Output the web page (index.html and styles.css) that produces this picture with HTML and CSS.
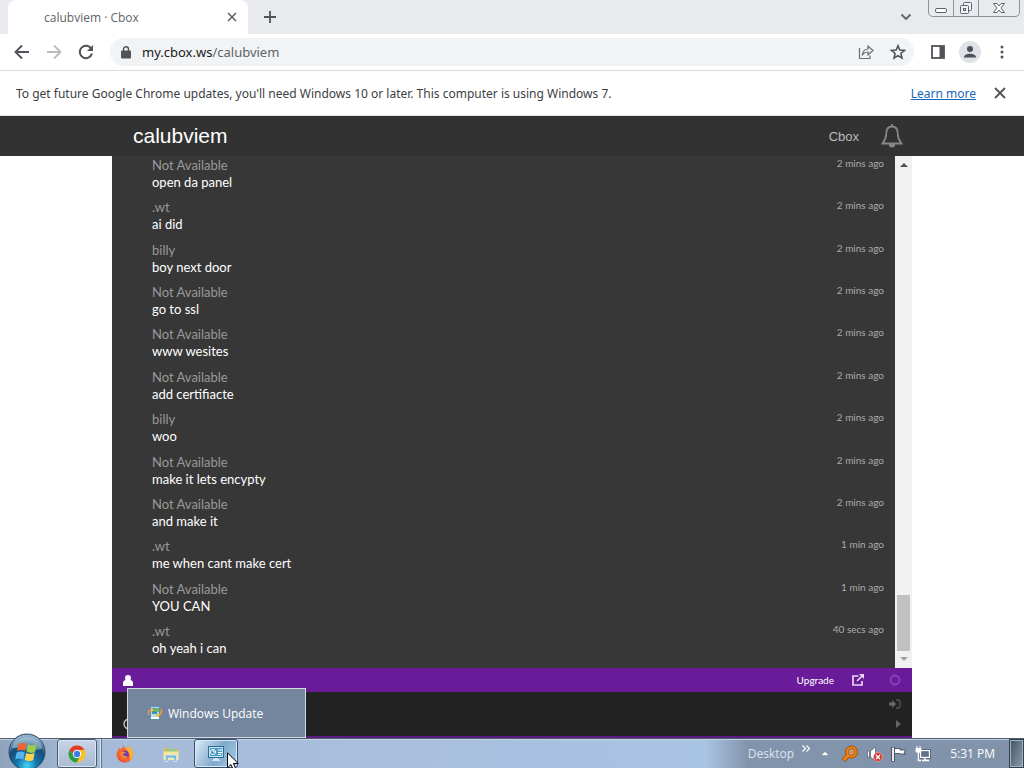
FILE: index.html
```html
<!DOCTYPE html>
<html lang="en">
<head>
  <meta charset="UTF-8">
  <meta name="viewport" content="width=device-width, initial-scale=1">
  <title>calubviem · Cbox</title>
  <link rel="stylesheet" href="styles.css">
</head>

<body>
  <!-- TAB STRIP -->
  <div class="tabstrip">
    <div class="tab">
      <span class="tab-title">calubviem · Cbox</span>
      <button class="icon-btn" aria-label="Close tab">
        <svg width="10" height="10" viewBox="0 0 10 10"><path d="M1 1l8 8M9 1l-8 8" stroke="#5f6368" stroke-width="1.6"/></svg>
      </button>
    </div>
    <button class="icon-btn new-tab" aria-label="New tab">
      <svg width="12" height="12" viewBox="0 0 12 12"><path d="M6 0v12M0 6h12" stroke="#505357" stroke-width="1.8"/></svg>
    </button>
    <button class="icon-btn tab-search" aria-label="Search tabs">
      <svg width="12" height="8" viewBox="0 0 12 8"><path d="M1.500 1.500L6 6l4.500-4.500" fill="none" stroke="#5f6368" stroke-width="1.8"/></svg>
    </button>
    <div class="win-buttons">
      <button class="win-btn" aria-label="Minimize">
        <svg width="24" height="16" viewBox="0 0 24 16"><rect x="6.500" y="8.500" width="11" height="4" rx="1.500" fill="#fff" stroke="#5c6270"/></svg>
      </button>
      <button class="win-btn" aria-label="Restore">
        <svg width="24" height="16" viewBox="0 0 24 16" fill="#f4f5f7" stroke="#5c6270"><rect x="9.500" y="2.500" width="8" height="8" rx="1"/><rect x="6.500" y="5.500" width="8" height="8" rx="1"/><rect x="9.500" y="8.500" width="2" height="2"/></svg>
      </button>
      <button class="win-btn win-close" aria-label="Close">
        <svg width="40" height="16" viewBox="0 0 40 16"><path d="M14.500 3.500h3.500l2 2.500 2-2.500h3.500l-3.500 4.500 3.500 4.500h-3.500l-2-2.500-2 2.500h-3.500l3.500-4.500z" fill="#fff" stroke="#5c6270"/></svg>
      </button>
    </div>
  </div>

  <!-- TOOLBAR -->
  <div class="toolbar">
    <button class="icon-btn nav-btn" aria-label="Back">
      <svg width="16" height="16" viewBox="0 0 16 16"><path d="M15 8H2M8 1.500L1.500 8 8 14.500" fill="none" stroke="#505357" stroke-width="1.900"/></svg>
    </button>
    <button class="icon-btn nav-btn" aria-label="Forward">
      <svg width="16" height="16" viewBox="0 0 16 16"><path d="M1 8h13M8 1.500L14.500 8 8 14.500" fill="none" stroke="#babcbe" stroke-width="1.900"/></svg>
    </button>
    <button class="icon-btn nav-btn" aria-label="Reload">
      <svg width="16" height="16" viewBox="0 0 16 16"><path d="M13.300 4.700A6.200 6.200 0 1 0 14 9.500" fill="none" stroke="#505357" stroke-width="2"/><path d="M15 1v6H9z" fill="#505357"/></svg>
    </button>
    <div class="omnibox">
      <svg width="10" height="13" viewBox="0 0 10 13"><rect y="4.500" width="10" height="8" rx="1" fill="#505357"/><path d="M2.500 5V3.300a2.500 2.500 0 0 1 5 0V5" fill="none" stroke="#505357" stroke-width="1.400"/></svg>
      <a class="url" href="#">my.cbox.ws<span>/calubviem</span></a>
      <button class="icon-btn" aria-label="Share">
        <svg width="16" height="16" viewBox="0 0 16 16" fill="none" stroke="#6a6d71" stroke-width="1.200"><path d="M1.500 4v10.500h10.500v-3"/><path d="M4.500 10.500C5 7 7 5 10 5V2l5 4.500-5 4.500V8C7.500 8 6 8.800 4.500 10.500z"/></svg>
      </button>
      <button class="icon-btn" aria-label="Bookmark this page">
        <svg width="16" height="16" viewBox="0 0 16 16"><path d="M8 1.800l1.800 4.300 4.600.4-3.500 3 1.100 4.600L8 11.600l-4 2.500 1.100-4.600-3.500-3 4.600-.4z" fill="none" stroke="#505357" stroke-width="1.600"/></svg>
      </button>
    </div>
    <div class="toolbar-actions">
      <button class="icon-btn" aria-label="Side panel">
        <svg width="16" height="16" viewBox="0 0 16 16"><rect x="2" y="2" width="12" height="12" fill="none" stroke="#505357" stroke-width="1.800"/><path d="M9.500 2H14v12H9.500z" fill="#505357"/></svg>
      </button>
      <button class="icon-btn" aria-label="Profile">
        <svg width="22" height="22" viewBox="0 0 22 22"><circle cx="11" cy="11" r="11" fill="#dfe3e8"/><circle cx="11" cy="8" r="3" fill="#4a5159"/><path d="M5 16.500c0-5 12-5 12 0z" fill="#4a5159"/></svg>
      </button>
      <button class="icon-btn" aria-label="Menu">
        <svg width="16" height="16" viewBox="0 0 16 16" fill="#505357"><circle cx="8" cy="3" r="1.500"/><circle cx="8" cy="8" r="1.500"/><circle cx="8" cy="13" r="1.500"/></svg>
      </button>
    </div>
  </div>

  <!-- INFO BAR -->
  <div class="infobar">
    <p>To get future Google Chrome updates, you'll need Windows 10 or later. This computer is using Windows 7.</p>
    <a href="#">Learn more</a>
    <button class="icon-btn" aria-label="Dismiss">
      <svg width="12" height="12" viewBox="0 0 12 12"><path d="M1 1l10 10M11 1L1 11" stroke="#505357" stroke-width="1.800"/></svg>
    </button>
  </div>

  <!-- PAGE -->
  <header class="site-header">
    <div class="site-header-inner">
      <h1>calubviem</h1>
      <a href="#">Cbox</a>
      <button class="icon-btn" aria-label="Notifications">
        <svg width="22" height="24" viewBox="0 0 22 24"><path d="M11 2.500c-4.500 0-5.800 3.500-5.800 7.500 0 5-1.700 7-3.700 9.500h19c-2-2.500-3.700-4.500-3.700-9.500 0-4-1.300-7.500-5.800-7.500z" fill="none" stroke="#858585" stroke-width="1.800"/><path d="M10 0h2v3h-2zM7.800 20h6.400a3.200 3.600 0 0 1-6.400 0z" fill="#858585"/></svg>
      </button>
    </div>
  </header>

  <main class="cbox">
    <div class="messages-wrap">
      <ul class="messages">
        <li><time>2 mins ago</time><b>Not Available</b><p>open da panel</p></li>
        <li><time>2 mins ago</time><b>.wt</b><p>ai did</p></li>
        <li><time>2 mins ago</time><b>billy</b><p>boy next door</p></li>
        <li><time>2 mins ago</time><b>Not Available</b><p>go to ssl</p></li>
        <li><time>2 mins ago</time><b>Not Available</b><p>www wesites</p></li>
        <li><time>2 mins ago</time><b>Not Available</b><p>add certifiacte</p></li>
        <li><time>2 mins ago</time><b>billy</b><p>woo</p></li>
        <li><time>2 mins ago</time><b>Not Available</b><p>make it lets encypty</p></li>
        <li><time>2 mins ago</time><b>Not Available</b><p>and make it</p></li>
        <li><time>1 min ago</time><b>.wt</b><p>me when cant make cert</p></li>
        <li><time>1 min ago</time><b>Not Available</b><p>YOU CAN</p></li>
        <li><time>40 secs ago</time><b>.wt</b><p>oh yeah i can</p></li>
      </ul>
      <div class="scrollbar">
        <svg width="8" height="4" viewBox="0 0 8 4"><path d="M0 4l4-4 4 4z" fill="#505050"/></svg>
        <div class="thumb"></div>
        <svg width="8" height="4" viewBox="0 0 8 4"><path d="M0 0l4 4 4-4z" fill="#a0a0a0"/></svg>
      </div>
    </div>

    <div class="panel-bar">
      <button class="icon-btn users" aria-label="Users online">
        <svg width="10" height="11" viewBox="0 0 10 11" fill="#fff"><circle cx="5" cy="3" r="3"/><path d="M0 11V8.500Q0 5 3 5h4q3 0 3 3.500V11z"/></svg>
      </button>
      <a href="#">Upgrade</a>
      <button class="icon-btn" aria-label="Pop out">
        <svg width="12" height="12" viewBox="0 0 12 12"><path d="M6.500 2H1v9h9V7M5 7l5-5" fill="none" stroke="#e8d6f2" stroke-width="1.700"/><path d="M7 0h5v5z" fill="#e8d6f2"/></svg>
      </button>
      <button class="icon-btn status" aria-label="Connection status">
        <svg width="12" height="12" viewBox="0 0 12 12"><circle cx="6" cy="6" r="4.500" fill="none" stroke="#8d43b8" stroke-width="1.800"/></svg>
      </button>
    </div>

    <form class="post-form">
      <div class="post-row">
        <input type="text" aria-label="Name">
        <button type="button" class="icon-btn" aria-label="Log in">
          <svg width="12" height="10" viewBox="0 0 12 10"><path d="M0 3.500h3V1l4 4-4 4V6.500H0z" fill="#666"/><path d="M7 1h2.500Q11 1 11 2.500v5Q11 9 9.500 9H7" fill="none" stroke="#555" stroke-width="1.300"/></svg>
        </button>
      </div>
      <div class="post-row">
        <svg width="12" height="12" viewBox="0 0 12 12"><circle cx="6" cy="6" r="5" fill="none" stroke="#ccc" stroke-width="1.300"/></svg>
        <input type="text" aria-label="Message">
        <button type="button" class="icon-btn" aria-label="Send">
          <svg width="5" height="8" viewBox="0 0 5 8"><path d="M0 0l5 4-5 4z" fill="#666"/></svg>
        </button>
      </div>
    </form>
  </main>

  <!-- TASKBAR -->
  <footer class="taskbar">
    <button class="start" aria-label="Start">
      <svg width="38" height="38" viewBox="0 0 38 38">
        <defs>
          <radialGradient id="orb" cx="50%" cy="88%" r="80%"><stop offset="0" stop-color="#45d5f5"/><stop offset=".35" stop-color="#1674ad"/><stop offset=".7" stop-color="#164b77"/><stop offset="1" stop-color="#8db1cb"/></radialGradient>
        </defs>
        <circle cx="19" cy="19" r="18" fill="url(#orb)" stroke="#304c68"/>
        <path d="M4 15C7 1 31 1 34 15 28 20 12 14 4 15z" fill="#c9dce9" opacity=".45"/>
        <path d="M10.500 11q4-2 8 0l-1.500 7q-4-2-8 0z" fill="#ef6432"/>
        <path d="M20 11.500q4 2 8.500 0l-1.500 7.500q-4 2-8.500-.5z" fill="#9bd04b"/>
        <path d="M8.700 19.500q4-2 8 0l-1.500 7q-4-2-8 0z" fill="#55b6ee"/>
        <path d="M18.200 20q4 2 8.500 0l-1.500 7q-4 2-8.500-.3z" fill="#ffd44b"/>
      </svg>
    </button>
    <button class="task task-open" aria-label="Google Chrome">
      <svg width="18" height="18" viewBox="0 0 18 18"><circle cx="9" cy="9" r="8.500" fill="#fbc11c"/><path d="M1.600 4.800A8.500 8.500 0 0 1 16.400 4.800L9 5 6 11z" fill="#e23a2e"/><path d="M1.600 4.800A8.500 8.500 0 0 0 8.500 17.500L12.500 11 6 11z" fill="#2a9c48"/><circle cx="9" cy="9" r="4.200" fill="#fff"/><circle cx="9" cy="9" r="3.200" fill="#3a7de8"/></svg>
    </button>
    <span class="task-stack"></span>
    <button class="task" aria-label="Firefox">
      <svg width="18" height="18" viewBox="0 0 18 18"><path d="M9 17.500A8 8 0 0 1 2 5l1-2 2 1.500Q6 2 8 1q0 2 2 3l2-3q5 3 5 8.500a8 8 0 0 1-8 8z" fill="#f6662b"/><path d="M10 4l2-3q5 3 5 8.500a8 8 0 0 1-3 6Q15 8 10 4z" fill="#ffb62e"/><path d="M2 8q0 8 8 9-6 1-8-5z" fill="#e1375f"/><circle cx="9" cy="9.500" r="3.800" fill="#6b40b6"/><path d="M4 7q3-1 5 0l1 1q-3 0-3 1.500Q8 12 12 11q-2 4-6 1.500Q4 11 4 7z" fill="#f9862b"/></svg>
    </button>
    <button class="task" aria-label="Windows Explorer">
      <svg width="18" height="18" viewBox="0 0 18 18"><path d="M2 3h5l1 1.500h8V15H2z" fill="#d9b95b"/><path d="M4 4.500h10v7H4z" fill="#8fc984"/><path d="M1.500 6.500h15V15h-15z" fill="#f5e59d"/><path d="M3.500 16.500v-5.200q0-1.300 1.300-1.300h8.400q1.300 0 1.300 1.300v5.200H12V13H6v3.500z" fill="#76b9df" stroke="#dff0fa" stroke-width=".7"/></svg>
    </button>
    <button class="task task-active" aria-label="Windows Update">
      <svg width="18" height="17" viewBox="0 0 18 17"><rect x="1.500" y="1.500" width="15" height="11" fill="#4f9cc7" stroke="#2b6d94"/><rect x="2.500" y="2.500" width="13" height="9" fill="none" stroke="#c1e4f4"/><circle cx="6" cy="7" r="2.500" fill="#317fae" stroke="#fff"/><path d="M6 4.500V7h2.500M11 5h4M11 7.500h4M11 9.500h3" stroke="#fff" fill="none"/><path d="M7 13h4l2 3H5z" fill="#dbe4ea"/></svg>
    </button>
    <div class="tray">
      <span class="tray-label">Desktop</span>
      <button class="icon-btn toolbar-more" aria-label="More">
        <svg width="8" height="7" viewBox="0 0 8 7"><path d="M.5.500l3 3-3 3M4.500.500l3 3-3 3" fill="none" stroke="#fff" stroke-width="1.200"/></svg>
      </button>
      <button class="icon-btn show-hidden" aria-label="Show hidden icons">
        <svg width="8" height="5" viewBox="0 0 8 5"><path d="M0 4.500L4 .500l4 4z" fill="#fff" stroke="#55657a" stroke-width=".4"/></svg>
      </button>
      <button class="icon-btn" aria-label="Search tool">
        <svg width="18" height="18" viewBox="0 0 18 18"><path d="M6.500 11L2.500 15.500" stroke="#a34c09" stroke-width="4.500"/><circle cx="10.500" cy="7" r="6" fill="#f5820f" stroke="#a34c09"/><circle cx="10.500" cy="7" r="3.300" fill="#b0a794" stroke="#a34c09" stroke-width=".8"/><circle cx="10.500" cy="7" r="1.500" fill="#f5820f"/><path d="M7 10.500L2.800 15" stroke="#f5820f" stroke-width="3"/></svg>
      </button>
      <button class="icon-btn" aria-label="Volume">
        <svg width="16" height="16" viewBox="0 0 16 16"><path d="M.5 5h2v6h-2zM3.500 5L8.500 1v14l-5-4z" fill="#fff" stroke="#4c5b6e" stroke-width=".7"/><circle cx="11" cy="11" r="4.500" fill="#d33c35" stroke="#f1c1bd" stroke-width=".6"/><path d="M9 9l4 4M13 9l-4 4" stroke="#fff" stroke-width="1.400"/></svg>
      </button>
      <button class="icon-btn" aria-label="Action Center">
        <svg width="16" height="16" viewBox="0 0 16 16"><path d="M2 1v14.500" stroke="#34414f" stroke-width="3.500"/><path d="M2 1.500V15" stroke="#fff" stroke-width="1.800"/><path d="M3.500 2.500H9v1.500h5.500l-1.500 3 1.500 1H9V7.500H3.500z" fill="#fff" stroke="#34414f" stroke-width=".8"/></svg>
      </button>
      <button class="icon-btn" aria-label="Network">
        <svg width="16" height="16" viewBox="0 0 16 16"><rect x="5.500" y="4.500" width="9" height="7" fill="#5f7186" stroke="#34414f" stroke-width="2.600"/><rect x="5.500" y="4.500" width="9" height="7" fill="#5f7186" stroke="#fff" stroke-width="1.300"/><path d="M7 14.500h7M10 12v2M3.500 6v8.500H6" stroke="#fff" stroke-width="1.400" fill="none"/><path d="M1 2.500h5V5q0 1.500-2.500 1.500T1 5zM2 0v2.500M5 0v2.500" fill="#fff" stroke="#fff"/></svg>
      </button>
      <time class="clock">5:31 PM</time>
    </div>
    <button class="show-desktop" aria-label="Show desktop"></button>

    <!-- thumbnail popup over the page -->
    <div class="preview">
      <svg width="16" height="16" viewBox="0 0 16 16"><rect x="3.500" y="1.500" width="9" height="13" fill="#b9dced" stroke="#5794b5"/><path d="M4 12h8v2H4z" fill="#fff"/><path d="M5 3h5v6H5z" fill="#3f8fc4"/><path d="M8 3h4v4H8z" fill="#72b74d"/><path d="M2 10Q0 6 4 5M14 4q2 4-3 7" fill="none" stroke="#ee9b3b" stroke-width="1.500"/><path d="M4 3l4 2-4 2zM11 8l-3 3 4 1z" fill="#f3c24d"/></svg>
      <span>Windows Update</span>
    </div>
  </footer>

  <!-- mouse pointer -->
  <svg class="pointer" width="12" height="19" viewBox="0 0 12 19"><path d="M.5.800v15l3.500-3.300 2.300 5.200 2.400-1-2.300-5.200h4.800z" fill="#fff" stroke="#000"/></svg>
</body>
</html>
```
FILE: styles.css
```css
* {
  box-sizing: border-box;
}
body {
  display: flex;
  flex-direction: column;
  height: 100vh;
  margin: 0;
  overflow: hidden;
  background: #fff;
  color: #3c4043;
  font-family: 'Open Sans', 'Noto Sans', sans-serif;
  font-size: 12px;
}
h1, p, ul {
  margin: 0;
  padding: 0;
}
svg {
  display: block;
  flex: none;
}
.icon-btn {
  display: flex;
  flex: none;
  padding: 0;
  border: 0;
  background: none;
}

/* tab strip */
.tabstrip {
  display: flex;
  flex: none;
  align-items: center;
  height: 34px;
  padding: 0 4px 0 8px;
  background: #e8eaed;
}
.tab {
  display: flex;
  align-items: center;
  justify-content: space-between;
  width: 240px;
  height: 34px;
  padding: 0 11px 0 36px;
  border-radius: 8px 8px 0 0;
  background: #fff;
}
.tab-title {
  color: #5f6368;
}
.new-tab {
  margin-left: 16px;
}
.tab-search {
  margin-left: auto;
  margin-right: 16px;
}
.win-buttons {
  display: flex;
  align-self: flex-start;
  border: 1px solid #8d929b;
  border-top: 0;
  border-radius: 0 0 5px 5px;
}
.win-btn {
  padding: 0;
  border: 0;
  border-right: 1px solid #8d929b;
  background: none;
}
.win-close {
  border-right: 0;
}

/* toolbar */
.toolbar {
  display: flex;
  flex: none;
  align-items: center;
  gap: 16px;
  height: 37px;
  padding: 0 14px;
  border-bottom: 1px solid #d9dadc;
}
.toolbar-actions {
  display: flex;
  align-items: center;
  gap: 13px;
}
.omnibox {
  display: flex;
  flex: 1;
  align-items: center;
  gap: 16px;
  height: 28px;
  padding: 0 8px 0 11px;
  border-radius: 14px;
  background: #f1f3f4;
}
.omnibox > svg {
  margin-right: -5px;
}
.url {
  flex: 1;
  color: #202124;
  font-family: 'Noto Sans', sans-serif;
  font-size: 13px;
  text-decoration: none;
}
.url span {
  color: #5f6368;
}

/* info bar */
.infobar {
  display: flex;
  flex: none;
  align-items: center;
  height: 45px;
  padding: 0 18px 0 16px;
  border-bottom: 1px solid #e4e6e6;
  font-family: 'Noto Sans', sans-serif;
}
.infobar p {
  flex: 1;
}
.infobar a {
  margin-right: 18px;
  color: #1a66b8;
}

/* site header */
.site-header {
  flex: none;
  background: #323232;
  font-family: 'Liberation Sans', sans-serif;
}
.site-header-inner {
  display: flex;
  align-items: center;
  max-width: 800px;
  height: 40px;
  margin: 0 auto;
  padding: 0 9px 0 21px;
}
.site-header h1 {
  flex: 1;
  color: #fff;
  font-size: 21px;
  font-weight: 400;
}
.site-header a {
  margin-right: 22px;
  color: #bbb;
  font-size: 13px;
  text-decoration: none;
}

/* chat */
.cbox {
  display: flex;
  flex: 1;
  flex-direction: column;
  width: 100%;
  max-width: 800px;
  min-height: 0;
  margin: 0 auto;
  border-bottom: 2px solid #5a1c82;
  background: #222;
  font-family: Lato, sans-serif;
}
.messages-wrap {
  display: flex;
  flex: 1;
  min-height: 0;
  background: #373737;
}
.messages {
  display: flex;
  flex: 1;
  flex-direction: column;
  justify-content: space-between;
  padding: 1px 11px 11px 40px;
  list-style: none;
}
.messages li {
  color: #fff;
  font-size: 13px;
  line-height: 17px;
}
.messages b {
  color: #999;
  font-weight: 400;
}
.messages time {
  float: right;
  color: #aaa;
  font-size: 10px;
  line-height: 12px;
}
.scrollbar {
  display: flex;
  flex-direction: column;
  align-items: center;
  width: 17px;
  padding: 7px 0;
  background: #f1f1f1;
}
.thumb {
  width: 13px;
  height: 56px;
  margin-top: auto;
  margin-bottom: 6px;
  background: #c1c1c1;
}
.panel-bar {
  display: flex;
  flex: none;
  align-items: center;
  gap: 18px;
  height: 24px;
  padding: 0 11px;
  background: #6a1b9a;
}
.panel-bar .users {
  margin-right: auto;
}
.panel-bar a {
  color: #fff;
  font-size: 10px;
  text-decoration: none;
}
.panel-bar .status {
  margin-left: 7px;
}
.post-form {
  flex: none;
  padding: 2px 11px;
}
.post-row {
  display: flex;
  align-items: center;
  height: 20px;
}
.post-row input {
  flex: 1;
  min-width: 0;
  padding: 0 4px;
  border: 0;
  background: none;
  color: #fff;
  font: inherit;
}

/* taskbar */
.taskbar {
  display: flex;
  position: relative;
  flex: none;
  align-items: stretch;
  height: 30px;
  padding-left: 8px;
  border-top: 1px solid #4d5b6c;
  background: linear-gradient(90deg, #8fa3bc, #a5bad6 8%, #a9c1e0 50%, #a9c3e2 69%, #8294ab 73%, #8093aa);
  box-shadow: inset 0 1px #c3d2e4;
}
.start {
  align-self: flex-start;
  margin: -6px 11px 0 0;
  padding: 0;
  border: 0;
  background: none;
}
.task {
  display: flex;
  align-items: center;
  justify-content: center;
  width: 46px;
  padding: 0;
  border: 1px solid transparent;
  border-radius: 3px;
  background: none;
}
.task-open {
  width: 40px;
  border-color: #4c5c70;
  background: linear-gradient(#c6d4e6, #a9bbd2);
  box-shadow: inset 0 0 0 1px #dbe5f1;
}
.task-stack {
  width: 5px;
  border-right: 1px solid #62738a;
  box-shadow: inset -1px 0 #dbe5f1;
}
.task-active {
  width: 44px;
  border-color: #34506b;
  background: linear-gradient(120deg, #dfecf7, #7fa9cc 55%, #a8cdea);
  box-shadow: inset 0 0 0 1px #d7e8f7;
}
.tray {
  display: flex;
  align-items: center;
  gap: 8px;
  margin-left: auto;
  margin-right: 14px;
  color: #fff;
}
.tray-label {
  color: #dde4ec;
}
.toolbar-more {
  align-self: flex-start;
  margin-top: 6px;
}
.show-hidden {
  margin: 0 4px 0 3px;
}
.clock {
  margin-left: 11px;
}
.show-desktop {
  width: 15px;
  padding: 0;
  border: 1px solid #33404f;
  background: linear-gradient(110deg, #44525f, #8a9cad);
  box-shadow: inset 0 0 0 1px #9fb0c0;
}
.preview {
  display: flex;
  position: absolute;
  left: 127px;
  bottom: 30px;
  align-items: center;
  gap: 5px;
  width: 179px;
  height: 50px;
  padding: 0 19px;
  border: 1px solid #d3dbe6;
  background: #74869d;
  color: #fff;
  font-weight: 500;
}
.pointer {
  position: fixed;
  left: 227px;
  top: 752px;
}
```
